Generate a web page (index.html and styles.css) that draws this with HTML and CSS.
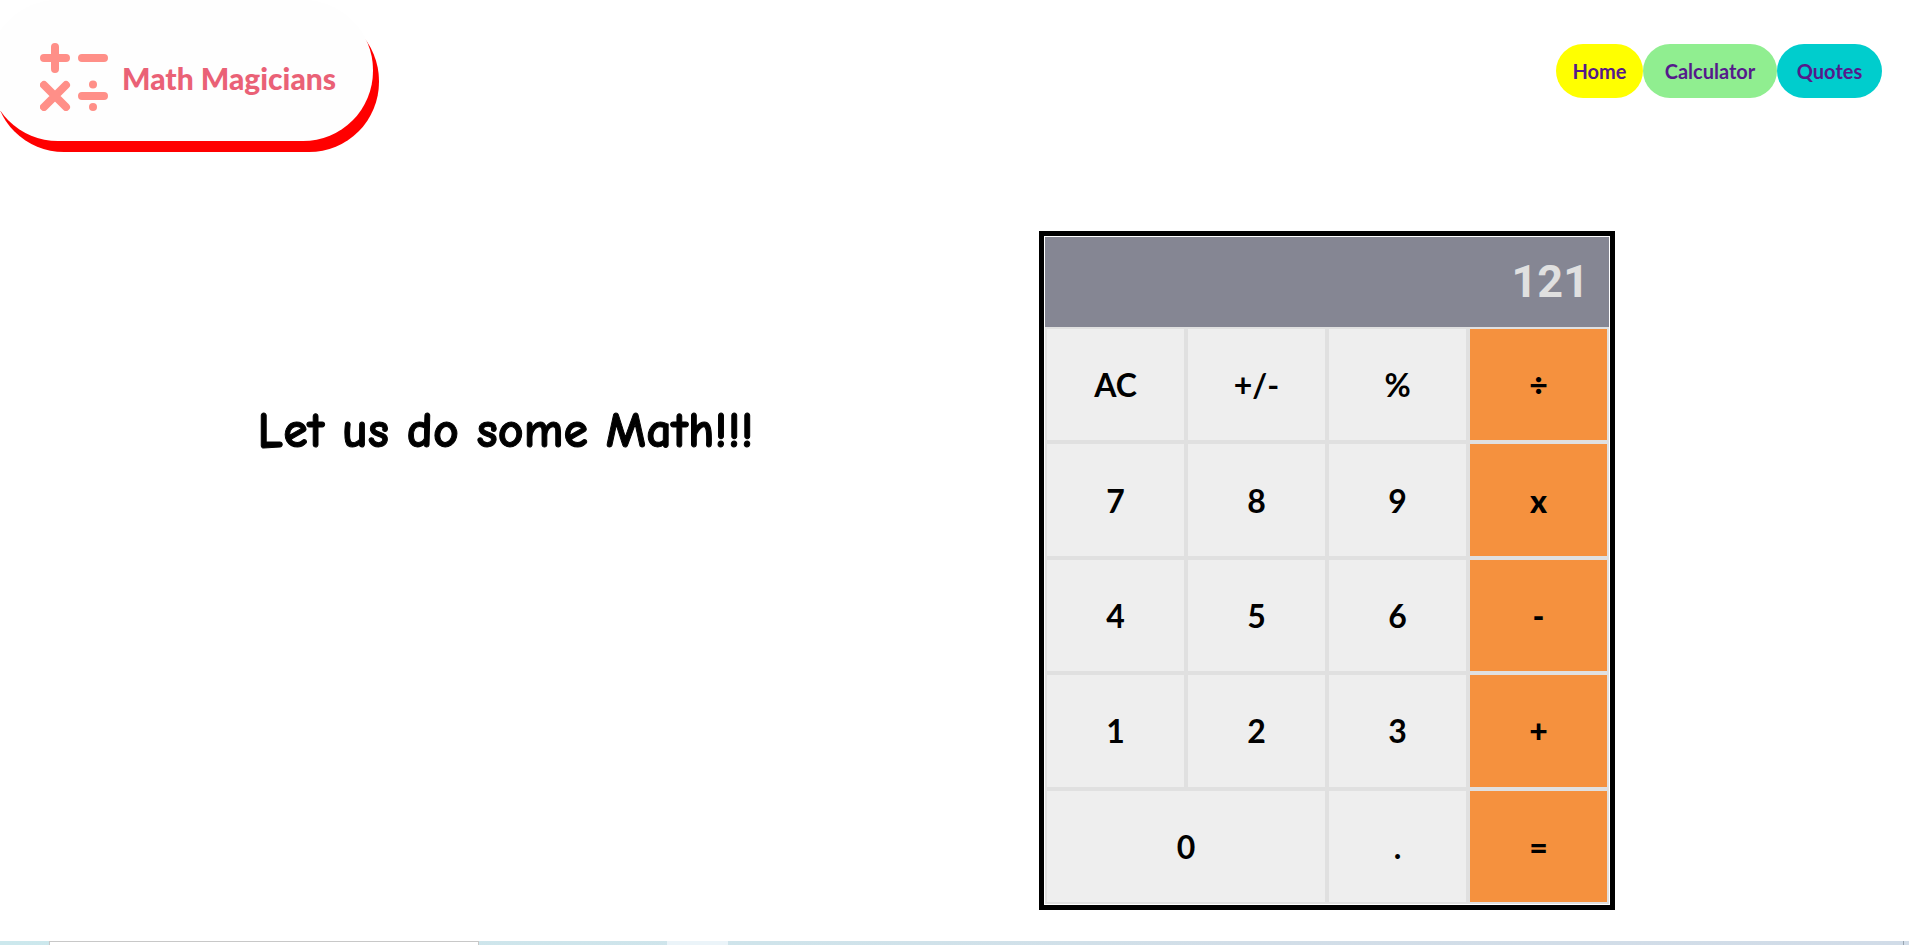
FILE: index.html
```html
<!DOCTYPE html>
<html lang="en">
<head>
<meta charset="utf-8">
<title>Math Magicians</title>
<link rel="stylesheet" href="styles.css">
</head>
<body>
<header class="header">
  <div class="brand">
    <svg class="brand-icon" viewBox="0 0 68 68" aria-hidden="true">
      <g fill="none" stroke="#ff8f88" stroke-width="8" stroke-linecap="round">
        <path d="M4 15H26M15 4V26M42 15H64M4 42L26 64M26 42L4 64M42 53H64"/>
      </g>
      <circle cx="53" cy="41.500" r="4" fill="#ff8f88"/>
      <circle cx="53" cy="64" r="4" fill="#ff8f88"/>
    </svg>
    <span class="brand-name">Math Magicians</span>
  </div>
  <nav class="nav">
    <a class="nav-link nav-home" href="#home">Home</a>
    <a class="nav-link nav-calculator" href="#calculator">Calculator</a>
    <a class="nav-link nav-quotes" href="#quotes">Quotes</a>
  </nav>
</header>
<main class="main">
  <h1 class="title">Let us do some Math!!!</h1>
  <section class="calculator" aria-label="Calculator">
    <output class="display">121</output>
    <div class="keys">
      <button class="key">AC</button>
      <button class="key">+/-</button>
      <button class="key">%</button>
      <button class="key key-op">÷</button>
      <button class="key">7</button>
      <button class="key">8</button>
      <button class="key">9</button>
      <button class="key key-op">x</button>
      <button class="key">4</button>
      <button class="key">5</button>
      <button class="key">6</button>
      <button class="key key-op">-</button>
      <button class="key">1</button>
      <button class="key">2</button>
      <button class="key">3</button>
      <button class="key key-op">+</button>
      <button class="key key-zero">0</button>
      <button class="key">.</button>
      <button class="key key-op">=</button>
    </div>
  </section>
</main>
<footer class="strip">
  <div class="strip-box"></div>
  <div class="strip-light"></div>
  <div class="strip-tick"></div>
</footer>
</body>
</html>
```
FILE: styles.css
```css
* {
  box-sizing: border-box;
}

body {
  margin: 0;
  min-height: 100vh;
  display: flex;
  flex-direction: column;
  overflow-x: hidden;
  background: #fff;
  font-family: Lato, "Open Sans", sans-serif;
}

.header {
  display: flex;
  justify-content: space-between;
  align-items: flex-start;
}

.brand {
  display: flex;
  align-items: center;
  gap: 14px;
  width: 385px;
  height: 141px;
  margin-left: -12px;
  padding: 12px 0 0 52px;
  border-radius: 70px;
  background: #fefefe;
  box-shadow: 6px 11px 0 #f00;
}

.brand-icon {
  width: 68px;
  height: 68px;
}

.brand-name {
  padding-top: 2px;
  color: #ea6176;
  font-size: 30px;
  font-weight: 900;
  line-height: 32px;
  white-space: nowrap;
}

.nav {
  display: grid;
  grid-template-columns: 87px 134px 105px;
  padding: 44px 27px 0 0;
}

.nav-link {
  border-radius: 27px;
  color: #551a8b;
  font-size: 20px;
  font-weight: 700;
  line-height: 54px;
  text-align: center;
  text-decoration: none;
}

.nav-home {
  background: #ff0;
}

.nav-calculator {
  background: #90ee90;
}

.nav-quotes {
  background: #00cdcd;
}

.main {
  flex: 1;
  display: grid;
  grid-template-columns: 1039fr 870fr;
  align-items: start;
  padding-top: 90px;
}

.title {
  margin: 168px 0 0;
  padding-right: 28px;
  font-family: "Comic Sans MS", "Comic Neue", "Open Sans", sans-serif;
  font-size: 50px;
  font-weight: 700;
  line-height: 64px;
  text-align: center;
  -webkit-text-stroke: 1px #000;
}

.calculator {
  width: 576px;
  max-width: 100%;
  padding: 1px;
  border: 5px solid #000;
}

.display {
  display: block;
  padding: 0 20px;
  background: #858693;
  color: #e0e0e0;
  font-family: "Liberation Sans Narrow", Roboto, sans-serif;
  font-size: 45px;
  font-weight: 700;
  line-height: 90px;
  text-align: right;
}

.keys {
  display: grid;
  grid-template-columns: repeat(4, 1fr);
  grid-auto-rows: 1fr;
  height: 577px;
}

.key {
  border: 2px solid #e0e0e0;
  background: #eee;
  color: #000;
  font-family: inherit;
  font-size: 32px;
  font-weight: 700;
}

.key-op {
  background: #f5913e;
  font-weight: 900;
}

.key-zero {
  grid-column: span 2;
}

.strip {
  display: flex;
  height: 4px;
  padding: 0 5px 0 49px;
  background: linear-gradient(90deg, #cce8ed, #cfe4eb 40%, #d2dee8 65%, #d1dce8);
}

.strip-box {
  width: 430px;
  border: 1px solid #c8c8c8;
  border-bottom: 0;
  background: #fff;
}

.strip-light {
  width: 61px;
  margin-left: 188px;
  background: #ebf4f9;
}

.strip-tick {
  width: 1px;
  margin-left: auto;
  background: #9aa5b0;
}
```
